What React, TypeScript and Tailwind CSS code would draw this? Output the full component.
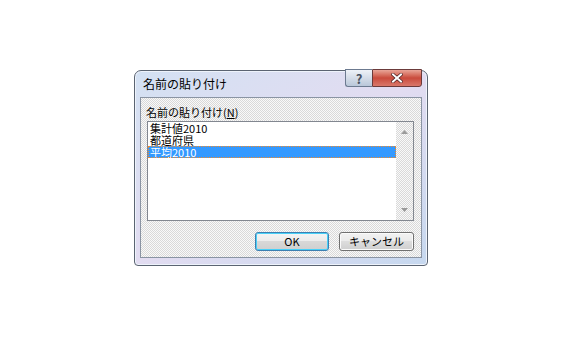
import React from "react";

const items = ["集計値2010", "都道府県", "平均2010"];

const dither =
  "bg-[repeating-conic-gradient(#d9d9d9_0_25%,#f9f9f9_0_50%)] bg-[length:2px_2px]";

export default function App() {
  const selected = 2;

  return (
    <div
      className="w-[567px] h-[340px] bg-white overflow-hidden pt-[70px] pl-[134px]"
      style={{ fontFamily: '"Noto Sans CJK JP", "Noto Sans", sans-serif' }}
    >
      {/* window frame */}
      <div className="w-[294px] h-[196px] flex flex-col rounded-t-[7px] rounded-b-[4px] border border-[#5b6472] bg-gradient-to-br from-[#d3e1f3] via-[#e2dcf1] to-[#c6d8ef] shadow-[inset_0_0_0_1px_#eef3fb]">
        {/* title bar */}
        <div className="h-[26px] flex justify-between pl-[8px] pr-[5px]">
          <span className="text-[12px] leading-[26px] text-black">名前の貼り付け</span>
          <div className="flex -mt-[2px] h-[18px]">
            <div className="w-[27px] flex items-center justify-center rounded-bl-[3px] border border-[#6c7a90] border-r-0 bg-gradient-to-b from-[#eef2f8] via-[#d4dce8] to-[#b9c7d9] text-[13px] font-bold leading-none text-[#4a5262]">
              ?
            </div>
            <div className="w-[50px] flex items-center justify-center rounded-br-[3px] border border-[#6b3a3a] bg-gradient-to-b from-[#e8a598] via-[#c94a3c] to-[#d9776a]">
              <svg width="12" height="10" viewBox="0 0 12 10">
                <path d="M2 1.5 L10 8.5 M10 1.5 L2 8.5" stroke="#4a1f1f" strokeWidth="3.4" strokeLinecap="square" />
                <path d="M2 1.5 L10 8.5 M10 1.5 L2 8.5" stroke="#ffffff" strokeWidth="2" strokeLinecap="square" />
              </svg>
            </div>
          </div>
        </div>

        {/* client area */}
        <div className="mx-[5px] h-[161px] border border-[#8a94a3] flex flex-col">
          <div className={`flex-1 flex flex-col ${dither}`}>
            <div className="pt-[7px] pl-[5px] text-[11px] leading-[14px] text-black">
              名前の貼り付け(<span className="underline">N</span>)
            </div>

            {/* listbox */}
            <div className="mt-[2px] ml-[6px] w-[267px] h-[100px] border border-[#828790] bg-white flex">
              <div className="flex-1 flex flex-col">
                {items.map((it, i) => (
                  <div
                    key={it}
                    className={
                      i === selected
                        ? "h-[12px] pl-[2px] text-[11px] leading-[12px] text-white bg-[#3399ff] outline outline-1 outline-dotted outline-[#f08a2c] -outline-offset-1"
                        : "h-[12px] pl-[2px] text-[11px] leading-[12px] text-black"
                    }
                  >
                    {it}
                  </div>
                ))}
              </div>
              {/* scrollbar */}
              <div className={`w-[17px] flex flex-col justify-between items-center py-[8px] ${dither}`}>
                <svg width="7" height="4" viewBox="0 0 7 4">
                  <path d="M0 4 L3.5 0 L7 4 Z" fill="#9a9a9a" />
                </svg>
                <svg width="7" height="4" viewBox="0 0 7 4">
                  <path d="M0 0 L3.5 4 L7 0 Z" fill="#9a9a9a" />
                </svg>
              </div>
            </div>

            {/* buttons */}
            <div className="mt-[11px] flex justify-end gap-[10px] pr-[7px]">
              <button className="w-[74px] h-[19px] rounded-[3px] border border-[#3c7fb1] shadow-[inset_0_0_0_1px_#48d0f8] bg-[linear-gradient(#f4f4f4_0%,#ececec_45%,#d8d8d8_50%,#cfcfcf_100%)] text-[11px] leading-none text-black">
                OK
              </button>
              <button className="w-[75px] h-[19px] rounded-[3px] border border-[#707070] shadow-[inset_0_0_0_1px_#fbfbfb] bg-[linear-gradient(#f2f2f2_0%,#ebebeb_45%,#dddddd_50%,#cfcfcf_100%)] text-[11px] leading-none text-black">
                キャンセル
              </button>
            </div>
          </div>
        </div>
      </div>
    </div>
  );
}
